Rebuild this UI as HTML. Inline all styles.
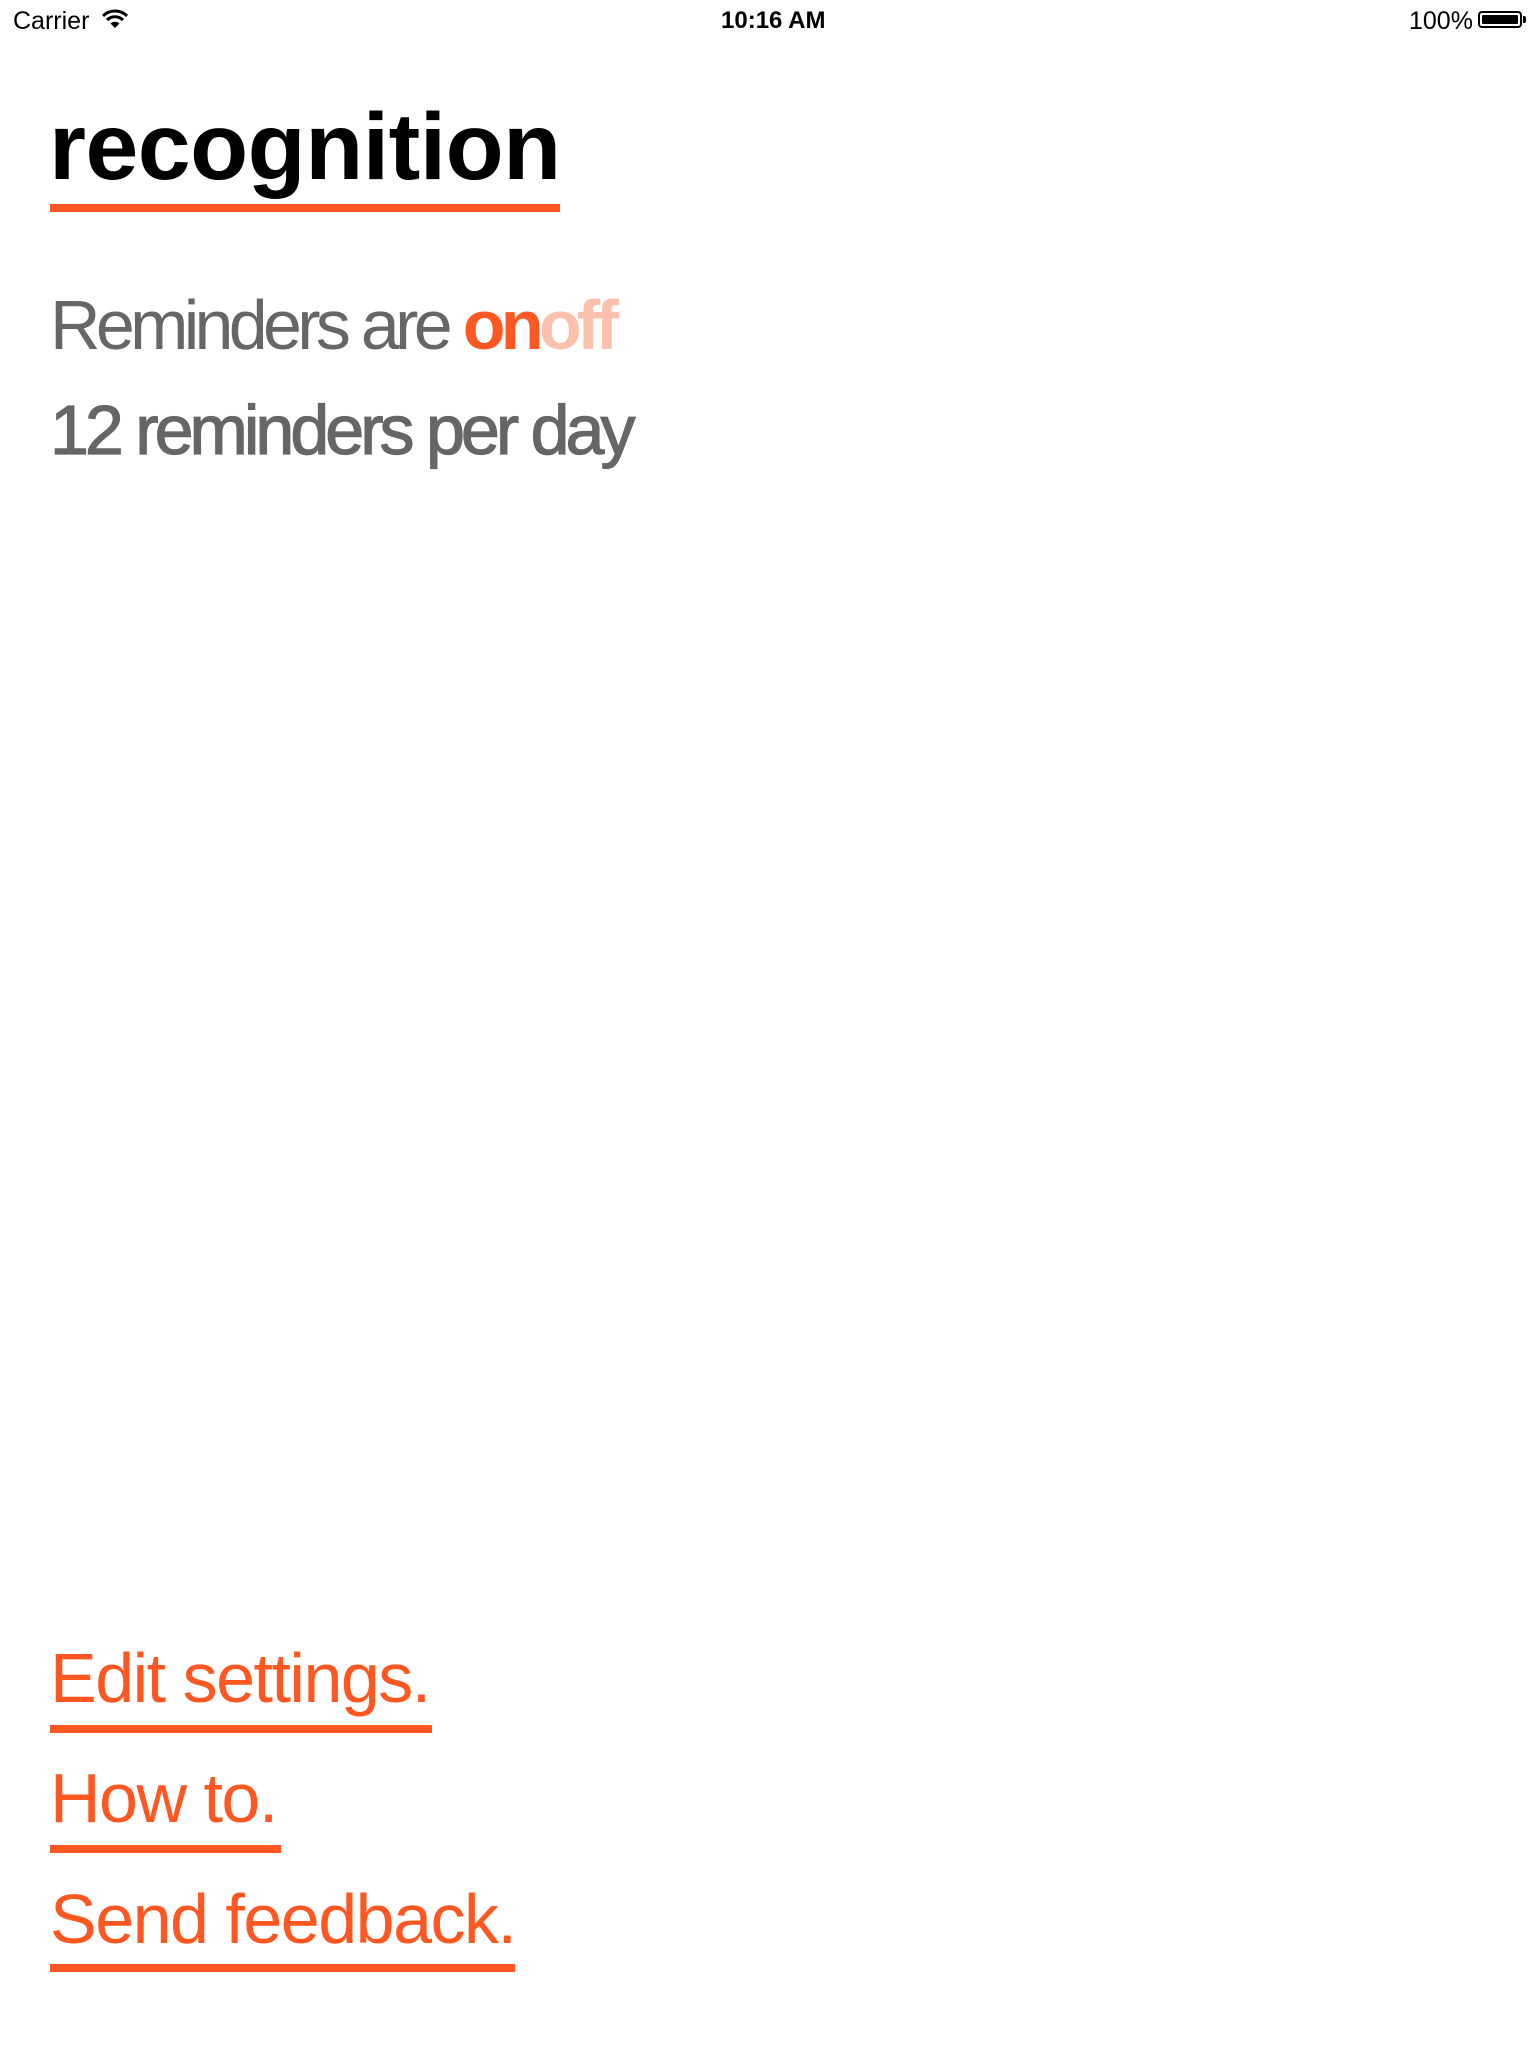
<!DOCTYPE html>
<html><head><meta charset="utf-8"><style>
html,body{margin:0;padding:0;background:#fff;}
body{width:1536px;height:2048px;position:relative;overflow:hidden;font-family:"Liberation Sans",Arial,sans-serif;}
.a{position:absolute;white-space:nowrap;line-height:1;}
.bar{position:absolute;background:#FF5722;height:8px;left:50px;}
</style></head><body>
<div class="a" style="left:13px;top:9px;font-size:25px;color:#000;">Carrier</div>
<svg class="a" style="left:102px;top:9px" width="26" height="20" viewBox="0 0 26 20">
<path d="M1 7 A17 17 0 0 1 25 7" stroke="#000" stroke-width="3" fill="none"/>
<path d="M5 11 A11.5 11.5 0 0 1 21 11" stroke="#000" stroke-width="3" fill="none"/>
<path d="M13 19 L8.5 14.5 A6.5 6.5 0 0 1 17.5 14.5 Z" fill="#000"/>
</svg>
<div class="a" style="left:721px;top:9px;font-size:24px;font-weight:bold;color:#000;">10:16 AM</div>
<div class="a" style="left:1409px;top:9px;font-size:25px;color:#000;">100%</div>
<div class="a" style="left:1478px;top:11px;width:44px;height:17px;border:2px solid #000;border-radius:4px;box-sizing:border-box;padding:2px;"><div style="background:#000;width:100%;height:100%;border-radius:1px;"></div></div>
<div class="a" style="left:1523px;top:16px;width:3px;height:7px;background:#000;border-radius:0 2px 2px 0;"></div>

<div class="a" style="left:49px;top:100px;font-size:95px;font-weight:bold;letter-spacing:-0.5px;color:#000;">recognition</div>
<div class="bar" style="top:204px;width:510px;"></div>

<div class="a" style="left:50px;top:290px;font-size:70px;letter-spacing:-4.7px;color:#666;">Reminders are <b style="color:#FF5722">on</b><b style="color:#FBC1AD">off</b></div>
<div class="a" style="left:50px;top:395px;font-size:70px;letter-spacing:-4px;color:#666;-webkit-text-stroke:1.2px #666;">12 reminders per day</div>

<div class="a" style="left:50px;top:1643px;font-size:70px;letter-spacing:-1.5px;color:#FF5722;">Edit settings.</div>
<div class="bar" style="top:1725px;width:382px;"></div>
<div class="a" style="left:50px;top:1763px;font-size:70px;letter-spacing:-1.5px;color:#FF5722;">How to.</div>
<div class="bar" style="top:1845px;width:231px;"></div>
<div class="a" style="left:50px;top:1884px;font-size:70px;letter-spacing:-1.5px;color:#FF5722;">Send feedback.</div>
<div class="bar" style="top:1964px;width:465px;"></div>
</body></html>
